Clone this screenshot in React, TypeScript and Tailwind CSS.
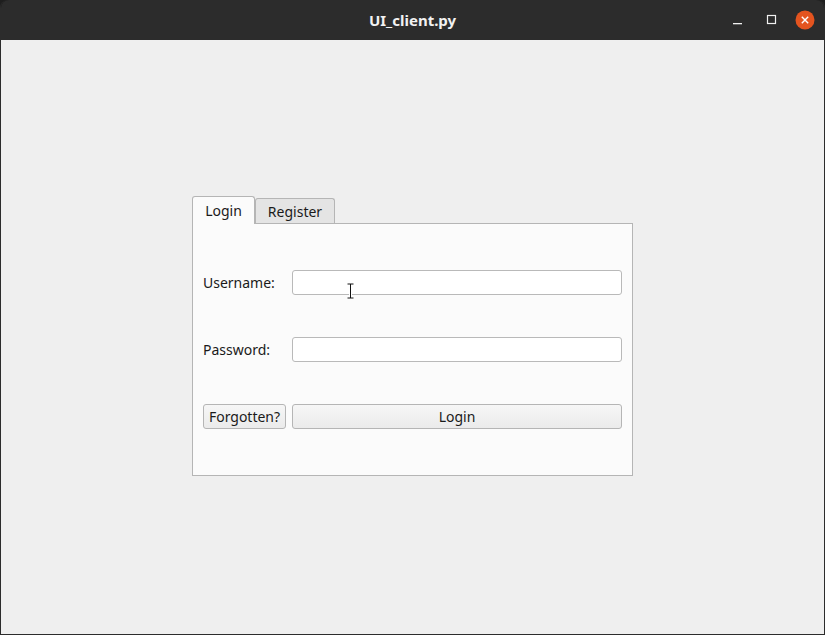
import React from 'react';

const font = { fontFamily: '"Noto Sans", "DejaVu Sans", sans-serif' };

function TitleBar() {
  return (
    <div className="relative flex h-[40px] items-center justify-center rounded-t-[8px] bg-[#2c2c2c]">
      <span className="text-[15px] font-bold text-[#f2f2f2]">UI_client.py</span>
      <div className="absolute right-[9px] top-0 flex h-full items-center">
        {/* minimise */}
        <svg width="14" height="14" viewBox="0 0 14 14">
          <rect x="2" y="10" width="9" height="1.3" fill="#f0f0f0" />
        </svg>
        {/* maximise */}
        <svg className="ml-[20px]" width="14" height="14" viewBox="0 0 14 14">
          <rect x="2.5" y="2.5" width="8" height="8" fill="none" stroke="#f0f0f0" strokeWidth="1.2" />
        </svg>
        {/* close */}
        <svg className="ml-[16px]" width="20" height="20" viewBox="0 0 20 20">
          <circle cx="10" cy="10" r="9.5" fill="#e4541f" />
          <path d="M6.8 6.8 L13.2 13.2 M13.2 6.8 L6.8 13.2" stroke="#fff" strokeWidth="1.4" />
        </svg>
      </div>
    </div>
  );
}

function Field({ label }: { label: string }) {
  return (
    <div className="flex h-[24px] items-center">
      <span className="w-[89px] text-[14px] text-[#1a1a1a]">{label}</span>
      <div className="h-[25px] flex-1 rounded-[3px] border border-[#b9b9b9] bg-white" />
    </div>
  );
}

export default function App() {
  return (
    <div className="w-[825px] h-[635px] bg-[#1e1e1e]" style={font}>
      <div className="flex h-full flex-col overflow-hidden rounded-t-[8px] border-x border-b border-[#2c2c2c]">
        <TitleBar />
        <div className="flex flex-1 flex-col bg-[#efefef] pl-[191px] pt-[156px]">
          <div className="w-[441px]">
            {/* tabs */}
            <div className="flex items-end">
              <div className="relative z-10 -mb-px flex h-[28px] w-[63px] items-center justify-center rounded-t-[3px] border border-b-0 border-[#b5b5b5] bg-[#fbfbfb] text-[14px] text-[#1a1a1a]">
                Login
              </div>
              <div className="flex h-[25px] w-[80px] items-center justify-center rounded-t-[3px] border border-b-0 border-[#b5b5b5] bg-[#e4e4e4] text-[14px] text-[#1a1a1a]">
                Register
              </div>
            </div>
            {/* pane */}
            <div className="relative h-[253px] border border-[#b5b5b5] bg-[#fbfbfb] px-[10px] pt-[46px]">
              <div className="flex flex-col gap-[43px]">
                <Field label="Username:" />
                <Field label="Password:" />
                <div className="flex h-[24px] items-center gap-[6px]">
                  <button className="h-[25px] w-[83px] rounded-[3px] border border-[#b5b5b5] bg-gradient-to-b from-[#f6f6f6] to-[#ebebeb] text-[14px] text-[#1a1a1a]">
                    Forgotten?
                  </button>
                  <button className="h-[25px] flex-1 rounded-[3px] border border-[#b5b5b5] bg-gradient-to-b from-[#f6f6f6] to-[#ebebeb] text-[14px] text-[#1a1a1a]">
                    Login
                  </button>
                </div>
              </div>
              {/* text cursor over the username field */}
              <svg className="absolute left-[154px] top-[59px]" width="7" height="16" viewBox="0 0 7 16">
                <path d="M0.5 1 H6.5 M3.5 1 V15 M0.5 15 H6.5" stroke="#fff" strokeWidth="3" />
                <path d="M0.5 1 H6.5 M3.5 1 V15 M0.5 15 H6.5" stroke="#111" strokeWidth="1" />
              </svg>
            </div>
          </div>
        </div>
      </div>
    </div>
  );
}
